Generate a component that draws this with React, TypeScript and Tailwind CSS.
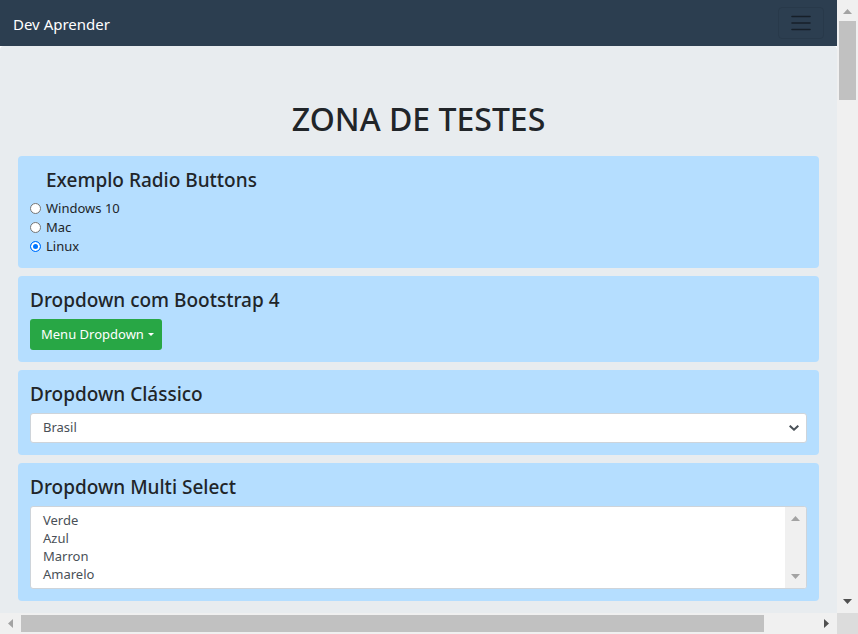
import { useState, type ReactNode } from "react";

const systems = ["Windows 10", "Mac", "Linux"];
const countries = ["Brasil", "Portugal", "Angola"];
const colours = ["Verde", "Azul", "Marron", "Amarelo"];

function Panel({ children }: { children: ReactNode }) {
  return <section className="rounded bg-[#b5deff] p-3">{children}</section>;
}

const arrowPaths = {
  up: "M0 5h9L4.500 0z",
  down: "M0 0h9L4.500 5z",
  left: "M5 0v9L0 4.500z",
  right: "M0 0v9L5 4.500z",
};

function Arrow({ to, className }: { to: keyof typeof arrowPaths; className: string }) {
  const upright = to === "up" || to === "down";
  return (
    <svg
      width={upright ? 9 : 5}
      height={upright ? 5 : 9}
      viewBox={upright ? "0 0 9 5" : "0 0 5 9"}
      className={className}
      aria-hidden="true"
    >
      <path d={arrowPaths[to]} fill="currentColor" />
    </svg>
  );
}

export default function App() {
  const [system, setSystem] = useState("Linux");

  return (
    <div className="grid min-h-screen grid-cols-[minmax(0,1fr)_21px] grid-rows-[1fr_21px] bg-white font-['Noto_Sans','Open_Sans',sans-serif] text-[13px] text-[#212529]">
      <div className="flex flex-col">
        <nav className="flex h-[46px] items-center justify-between bg-[#2c3e50] px-[13px]">
          <a href="#" className="pt-[2px] text-[15px] leading-6 text-white">
            Dev Aprender
          </a>
          <button
            type="button"
            aria-label="Menu"
            className="flex h-8 w-[46px] items-center justify-center rounded border border-[#28394a] text-[#161f28]"
          >
            <svg width="20" height="16" viewBox="0 0 20 16" aria-hidden="true">
              <path
                d="M1 1.500h18M1 8h18M1 14.500h18"
                stroke="currentColor"
                strokeWidth="1.600"
                strokeLinecap="round"
              />
            </svg>
          </button>
        </nav>

        <main className="flex-1 rounded-t bg-[#e8ecef] px-[18px] pt-[52px] pb-3">
          <h1 className="mb-4 text-center text-[32px] leading-[42px] font-medium">ZONA DE TESTES</h1>

          <div className="flex flex-col gap-2">
            <Panel>
              <fieldset>
                <legend className="mb-[6px] pl-4 text-[19px] leading-[25px] font-medium">Exemplo Radio Buttons</legend>
                <div className="flex flex-col">
                  {systems.map((name) => (
                    <label key={name} className="flex h-[19px] items-center gap-[5px]">
                      <input
                        type="radio"
                        name="system"
                        value={name}
                        checked={system === name}
                        onChange={() => setSystem(name)}
                        className="size-[11px] appearance-none rounded-full border border-[#767676] bg-white checked:border-[#0075ff] checked:bg-[#0075ff] checked:ring-2 checked:ring-white checked:ring-inset"
                      />
                      {name}
                    </label>
                  ))}
                </div>
              </fieldset>
            </Panel>

            <Panel>
              <h2 className="mb-[6px] text-[19px] leading-[25px] font-medium">Dropdown com Bootstrap 4</h2>
              <button
                type="button"
                aria-haspopup="menu"
                className="flex h-[31px] items-center gap-1 rounded-[3px] bg-[#28a745] pr-2 pl-[11px] text-white"
              >
                Menu Dropdown
                <svg width="6" height="3" viewBox="0 0 6 3" aria-hidden="true">
                  <path d="M0 0h6L3 3z" fill="currentColor" />
                </svg>
              </button>
            </Panel>

            <Panel>
              <h2 className="mb-[6px] text-[19px] leading-[25px] font-medium">
                <label htmlFor="country">Dropdown Clássico</label>
              </h2>
              <div className="relative">
                <select
                  id="country"
                  className="block h-[30px] w-full appearance-none rounded-[3px] border border-[#ced4da] bg-white px-3 text-[#495057]"
                >
                  {countries.map((name) => (
                    <option key={name}>{name}</option>
                  ))}
                </select>
                <svg
                  width="10"
                  height="6"
                  viewBox="0 0 10 6"
                  className="pointer-events-none absolute top-3 right-2 text-[#495057]"
                  aria-hidden="true"
                >
                  <path d="M.7.700 5 4.700 9.300.7" fill="none" stroke="currentColor" strokeWidth="2" />
                </svg>
              </div>
            </Panel>

            <Panel>
              <h2 className="mb-[6px] text-[19px] leading-[25px] font-medium">
                <label htmlFor="colours">Dropdown Multi Select</label>
              </h2>
              <div className="flex h-[83px] overflow-hidden rounded-[3px] border border-[#ced4da] bg-white">
                <select
                  id="colours"
                  multiple
                  size={4}
                  className="min-w-0 flex-1 appearance-none overflow-hidden px-[10px] py-1 text-[#495057]"
                >
                  {colours.map((name) => (
                    <option key={name} className="h-[18px] px-[2px] py-0 leading-[18px]">
                      {name}
                    </option>
                  ))}
                </select>
                <div className="flex w-[21px] flex-col items-center justify-between bg-[#f0f0f0] py-[9px] text-[#a3a3a3]">
                  <Arrow to="up" className="" />
                  <Arrow to="down" className="" />
                </div>
              </div>
            </Panel>
          </div>
        </main>
      </div>

      <div className="flex flex-col items-center bg-[#f0f0f0] py-[9px]">
        <Arrow to="up" className="mb-[7px] text-[#a3a3a3]" />
        <div className="h-[79px] w-[17px] bg-[#c1c1c1]" />
        <Arrow to="down" className="mt-auto text-[#505050]" />
      </div>

      <div className="flex items-center bg-[#f0f0f0] px-2">
        <Arrow to="left" className="mr-2 shrink-0 text-[#a3a3a3]" />
        <div className="mr-[60px] h-[17px] flex-1 bg-[#c1c1c1]" />
        <Arrow to="right" className="shrink-0 text-[#505050]" />
      </div>
      <div className="bg-[#dcdcdc]" />
    </div>
  );
}
